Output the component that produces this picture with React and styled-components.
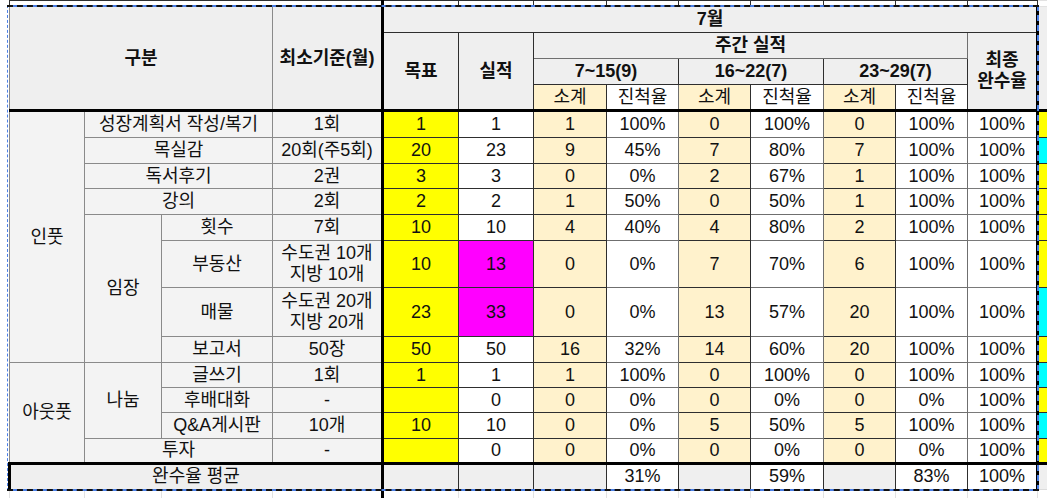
import React from 'react';
import styled, { createGlobalStyle } from 'styled-components';

const GlobalStyle = createGlobalStyle`
  html, body {
    margin: 0;
    padding: 0;
    background: #fff;
    overflow: hidden;
  }
  body {
    font-family: "Liberation Sans", Arial, "Noto Sans CJK KR", sans-serif;
    color: #111;
  }
`;

const tones = {
  white: '#ffffff',
  head: '#efefef',
  label: '#f3f3f3',
  goal: '#ffff00',
  sub: '#fff2cc',
  hot: '#ff00ff',
  cyan: '#00ffff',
};

const Sheet = styled.div`
  position: relative;
  width: 1047px;
  height: 498px;
  padding-left: 8px;
  box-sizing: border-box;
`;

const Grid = styled.table`
  border-collapse: collapse;
  table-layout: fixed;
  width: 1068px;
  font-size: 18px;
`;

const Col = styled.col`
  width: ${(p) => p.$w}px;
`;

const Row = styled.tr`
  height: ${(p) => p.$h}px;
`;

const Cell = styled.td`
  padding: 0 2px;
  border: 1px solid ${(p) => p.$line || '#2e2e2e'};
  background: ${(p) => tones[p.$tone || 'white']};
  font-weight: ${(p) => (p.$bold ? 700 : 400)};
  text-align: center;
  vertical-align: middle;
  white-space: nowrap;
  line-height: 21px;
  overflow: hidden;
  ${(p) => p.$thickLeft && 'border-left: 3px solid #000;'}
  ${(p) => p.$thickTop && 'border-top: 3px solid #000;'}
  ${(p) => p.$thickRight && 'border-right: 3px solid #000;'}
  ${(p) => p.$thickBottom && 'border-bottom: 2px solid #000;'}
`;

const Ghost = styled.td`
  padding: 0;
  border: 1px solid ${(p) => p.$line || '#e2e2e2'};
  background: #fff;
  ${(p) => p.$thickLeft && 'border-left: 3px solid #000;'}
`;

// marching-ants copy selection over the block
const Selection = styled.div`
  position: absolute;
  left: 7px;
  top: 5px;
  width: 1032px;
  height: 486px;
  box-sizing: border-box;
  border-top: 2px solid #4a7fe6;
  border-bottom: 2px solid #4a7fe6;
  border-left: 1px dashed #4a7fe6;
  border-right: 2px dashed #4a7fe6;
  pointer-events: none;

  &::after {
    content: '';
    position: absolute;
    left: -1px;
    right: -2px;
    top: -2px;
    bottom: -2px;
    border-top: 2px dashed #111;
    border-bottom: 2px dashed #111;
  }
`;

const widths = [75, 77, 111, 110, 76, 75, 73, 72, 72, 73, 72, 72, 70, 40];

const LABEL_LINE = '#8a8a8a';

const rows = [
  { h: 27, lead: [{ t: '인풋', rs: 8 }, { t: '성장계획서 작성/복기', cs: 2 }], min: ['1회'], goal: '1', actual: '1', weeks: ['1', '100%', '0', '100%', '0', '100%'], final: '100%', side: 'goal' },
  { h: 26, lead: [{ t: '목실감', cs: 2 }], min: ['20회(주5회)'], goal: '20', actual: '23', weeks: ['9', '45%', '7', '80%', '7', '100%'], final: '100%', side: 'cyan' },
  { h: 25, lead: [{ t: '독서후기', cs: 2 }], min: ['2권'], goal: '3', actual: '3', weeks: ['0', '0%', '2', '67%', '1', '100%'], final: '100%', side: 'goal' },
  { h: 26, lead: [{ t: '강의', cs: 2 }], min: ['2회'], goal: '2', actual: '2', weeks: ['1', '50%', '0', '50%', '1', '100%'], final: '100%', side: 'goal' },
  { h: 26, lead: [{ t: '임장', rs: 4 }, { t: '횟수' }], min: ['7회'], goal: '10', actual: '10', weeks: ['4', '40%', '4', '80%', '2', '100%'], final: '100%', side: 'goal' },
  { h: 47, lead: [{ t: '부동산' }], min: ['수도권 10개', '지방 10개'], goal: '10', actual: '13', hot: true, weeks: ['0', '0%', '7', '70%', '6', '100%'], final: '100%', side: 'goal' },
  { h: 49, lead: [{ t: '매물' }], min: ['수도권 20개', '지방 20개'], goal: '23', actual: '33', hot: true, weeks: ['0', '0%', '13', '57%', '20', '100%'], final: '100%', side: 'cyan' },
  { h: 26, lead: [{ t: '보고서' }], min: ['50장'], goal: '50', actual: '50', weeks: ['16', '32%', '14', '60%', '20', '100%'], final: '100%', side: 'goal' },
  { h: 25, lead: [{ t: '아웃풋', rs: 4 }, { t: '나눔', rs: 3 }, { t: '글쓰기' }], min: ['1회'], goal: '1', actual: '1', weeks: ['1', '100%', '0', '100%', '0', '100%'], final: '100%', side: 'cyan' },
  { h: 25, lead: [{ t: '후배대화' }], min: ['-'], goal: '', actual: '0', weeks: ['0', '0%', '0', '0%', '0', '0%'], final: '100%', side: 'goal' },
  { h: 26, lead: [{ t: 'Q&A게시판' }], min: ['10개'], goal: '10', actual: '10', weeks: ['0', '0%', '5', '50%', '5', '100%'], final: '100%', side: 'cyan' },
  { h: 25, lead: [{ t: '투자', cs: 2 }], min: ['-'], goal: '', actual: '0', weeks: ['0', '0%', '0', '0%', '0', '0%'], final: '100%', side: 'goal' },
];

const Lines = ({ items }) =>
  items.map((line, i) => (
    <React.Fragment key={i}>
      {i > 0 && <br />}
      {line}
    </React.Fragment>
  ));

const DataRow = ({ row, first }) => (
  <Row $h={row.h}>
    {row.lead.map((c) => (
      <Cell
        key={c.t}
        rowSpan={c.rs}
        colSpan={c.cs}
        $tone="label"
        $line={LABEL_LINE}
        $thickTop={first}
      >
        {c.t}
      </Cell>
    ))}
    <Cell $tone="label" $line={LABEL_LINE} $thickTop={first}>
      <Lines items={row.min} />
    </Cell>
    <Cell $tone="goal" $thickLeft $thickTop={first}>{row.goal}</Cell>
    <Cell $tone={row.hot ? 'hot' : 'white'} $thickTop={first}>{row.actual}</Cell>
    {row.weeks.map((v, i) => (
      <Cell
        key={i}
        $tone={i % 2 === 0 ? 'sub' : 'white'}
        $line={i % 2 === 0 ? '#2e2e2e' : '#6f6f6f'}
        $thickTop={first}
      >
        {v}
      </Cell>
    ))}
    <Cell $line="#7a7a7a" $thickRight $thickTop={first}>{row.final}</Cell>
    <Cell $tone={row.side} $thickTop={first} />
  </Row>
);

export default function App() {
  return (
    <>
      <GlobalStyle />
      <Sheet>
        <Grid>
          <colgroup>
            {widths.map((w, i) => (
              <Col key={i} $w={w} />
            ))}
          </colgroup>
          <tbody>
            <Row $h={6}>
              <Ghost colSpan={4} $line="#2e2e2e" />
              <Ghost $thickLeft $line="#2e2e2e" />
              {Array.from({ length: 8 }).map((_, i) => (
                <Ghost key={i} $line="#2e2e2e" />
              ))}
              <Ghost />
            </Row>

            <Row $h={26}>
              <Cell rowSpan={4} colSpan={3} $tone="head" $line={LABEL_LINE} $bold>구분</Cell>
              <Cell rowSpan={4} $tone="head" $line={LABEL_LINE} $bold>최소기준(월)</Cell>
              <Cell colSpan={9} $tone="head" $thickLeft $thickRight $bold>7월</Cell>
              <Cell rowSpan={4} $tone="head" $line="#dcdcdc" />
            </Row>
            <Row $h={26}>
              <Cell rowSpan={3} $tone="head" $thickLeft $bold>목표</Cell>
              <Cell rowSpan={3} $tone="head" $bold>실적</Cell>
              <Cell colSpan={6} $tone="head" $line="#6f6f6f" $bold>주간 실적</Cell>
              <Cell rowSpan={3} $tone="head" $thickRight $bold>
                최종
                <br />
                완수율
              </Cell>
            </Row>
            <Row $h={26}>
              <Cell colSpan={2} $tone="head" $bold>7~15(9)</Cell>
              <Cell colSpan={2} $tone="head" $bold>16~22(7)</Cell>
              <Cell colSpan={2} $tone="head" $bold>23~29(7)</Cell>
            </Row>
            <Row $h={26}>
              {['7~15', '16~22', '23~29'].map((k) => (
                <React.Fragment key={k}>
                  <Cell $tone="sub">소계</Cell>
                  <Cell $line="#6f6f6f">진척율</Cell>
                </React.Fragment>
              ))}
            </Row>

            {rows.map((row, i) => (
              <DataRow key={i} row={row} first={i === 0} />
            ))}

            <Row $h={26}>
              <Cell colSpan={4} $tone="head" $thickTop $thickLeft $thickBottom>완수율 평균</Cell>
              <Cell $tone="head" $thickTop $thickLeft $thickBottom />
              <Cell $tone="head" $thickTop $thickBottom />
              <Cell $tone="head" $thickTop $thickBottom />
              <Cell $thickTop $thickBottom>31%</Cell>
              <Cell $tone="head" $thickTop $thickBottom />
              <Cell $thickTop $thickBottom>59%</Cell>
              <Cell $tone="head" $thickTop $thickBottom />
              <Cell $thickTop $thickBottom>83%</Cell>
              <Cell $thickTop $thickRight $thickBottom>100%</Cell>
              <Cell $tone="head" $thickTop $line="#dcdcdc" />
            </Row>

            <Row $h={20}>
              {widths.map((_, i) => (
                <Ghost key={i} $thickLeft={i === 4} />
              ))}
            </Row>
          </tbody>
        </Grid>
        <Selection />
      </Sheet>
    </>
  );
}
